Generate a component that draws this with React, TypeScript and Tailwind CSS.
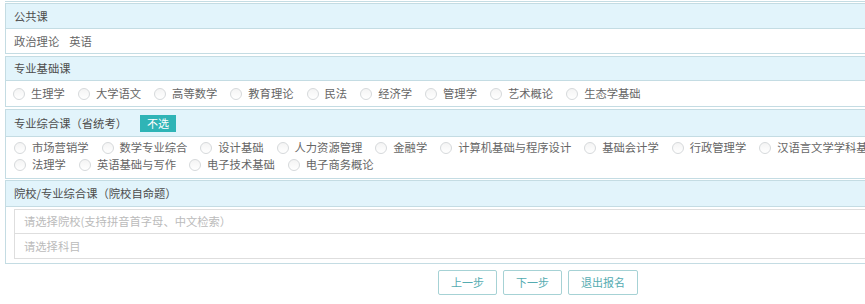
import React from 'react';

const FONT = '"Microsoft YaHei", "Noto Sans CJK SC", "Noto Sans", sans-serif';

const BASIC_COURSES = ['生理学', '大学语文', '高等数学', '教育理论', '民法', '经济学', '管理学', '艺术概论', '生态学基础'];
const COMPREHENSIVE_ROW1 = ['市场营销学', '数学专业综合', '设计基础', '人力资源管理', '金融学', '计算机基础与程序设计', '基础会计学', '行政管理学', '汉语言文学学科基础'];
const COMPREHENSIVE_ROW2 = ['法理学', '英语基础与写作', '电子技术基础', '电子商务概论'];

function Radio({ label }: { label: string }): React.ReactElement {
  return (
    <label className="mr-[13px] flex shrink-0 items-center whitespace-nowrap">
      <span className="h-[12px] w-[12px] rounded-full border border-[#d6d9db] bg-gradient-to-b from-[#f4f4f4] to-white" />
      <span className="ml-[6px]">{label}</span>
    </label>
  );
}

function Panel({ title, extra, headerClass, children, className }: {
  title: string;
  extra?: React.ReactNode;
  headerClass: string;
  children: React.ReactNode;
  className?: string;
}): React.ReactElement {
  return (
    <div className={`ml-[5px] w-[1066px] border border-[#c4dce3] ${className ?? ''}`}>
      <div className={`flex items-center border-b border-[#c4dce3] bg-[#e2f4fb] pl-[8px] text-[#4d4d4d] ${headerClass}`}>
        <span>{title}</span>
        {extra}
      </div>
      {children}
    </div>
  );
}

function StepButton({ text, wide }: { text: string; wide?: boolean }): React.ReactElement {
  return (
    <button
      type="button"
      className={`h-[25px] rounded-[2px] border border-[#a6d2d5] bg-white text-[11px] text-[#55acb1] ${wide ? 'w-[70px]' : 'w-[59px]'}`}
    >
      {text}
    </button>
  );
}

export default function App(): React.ReactElement {
  return (
    <div className="h-[304px] w-[865px] overflow-hidden bg-white text-[11.3px] leading-[17px] text-[#666]" style={{ fontFamily: FONT }}>
      <div className="ml-[5px] h-[2px] w-[1066px] border-b border-[#c4dce3]" />

      <Panel title="公共课" headerClass="h-[25px]" className="mt-[1px]">
        <div className="flex h-[24px] items-center bg-white pl-[8px]">
          <span>政治理论</span>
          <span className="ml-[10px]">英语</span>
        </div>
      </Panel>

      <Panel title="专业基础课" headerClass="h-[24px]" className="mt-[2px]">
        <div className="flex h-[25px] items-center pl-[7px]">
          {BASIC_COURSES.map((c) => (
            <Radio key={c} label={c} />
          ))}
        </div>
      </Panel>

      <Panel
        title="专业综合课（省统考）"
        headerClass="h-[27px]"
        className="mt-[2px]"
        extra={
          <span className="ml-[13px] flex h-[17px] w-[36px] items-center justify-center bg-[#2fb4b6] text-[11px] text-white">不选</span>
        }
      >
        <div className="h-[41px] pl-[8px] pt-[2px]">
          <div className="flex h-[17px] items-center">
            {COMPREHENSIVE_ROW1.map((c) => (
              <Radio key={c} label={c} />
            ))}
          </div>
          <div className="flex h-[17px] items-center">
            {COMPREHENSIVE_ROW2.map((c) => (
              <Radio key={c} label={c} />
            ))}
          </div>
        </div>
      </Panel>

      <Panel title="院校/专业综合课（院校自命题）" headerClass="h-[26px]" className="mt-[1px]">
        <div className="px-[8px] pb-[4px] pt-[2px]">
          <div className="flex h-[25px] items-center border border-[#dedede] pl-[9px] text-[#bbb]">
            请选择院校(支持拼音首字母、中文检索）
          </div>
          <div className="flex h-[25px] items-center border border-t-0 border-[#dedede] pl-[9px] text-[#bbb]">
            请选择科目
          </div>
        </div>
      </Panel>

      <div className="ml-[5px] mt-[6px] flex w-[1066px] justify-center gap-[6px]">
        <StepButton text="上一步" />
        <StepButton text="下一步" />
        <StepButton text="退出报名" wide />
      </div>
    </div>
  );
}
